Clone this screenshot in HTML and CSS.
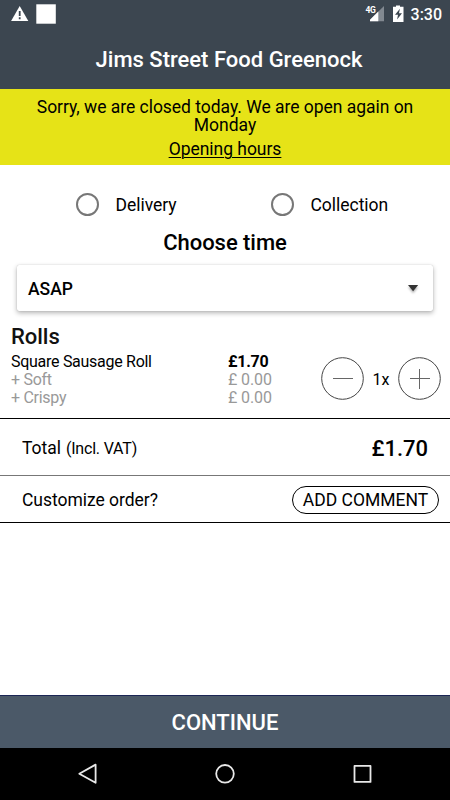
FILE: index.html
```html
<!DOCTYPE html>
<html lang="en">
<head>
<meta charset="utf-8">
<title>Jims Street Food Greenock</title>
<link rel="stylesheet" href="styles.css">
</head>
<body>
<div class="app">
  <header class="status">
    <svg class="status-left" width="60" height="28" viewBox="0 0 60 28">
      <path d="M19.7 6 28.3 21H11.1Z" fill="#fff"/>
      <path d="M19.7 11v5M19.7 17.3v2" stroke="#3c4650" stroke-width="1.8"/>
      <rect x="36.3" y="4.3" width="19.5" height="19.4" fill="#fff"/>
    </svg>
    <div class="status-right">
      <span class="network">4G</span>
      <svg width="41" height="28" viewBox="0 0 41 28">
        <path d="M14 6V21.3H-1.5Z" fill="#828991"/>
        <path d="M8.3 11.5V21.3H-1.5Z" fill="#fff"/>
        <path d="M23 6.8h3V5.5h4v1.3h3.5V22H23Z" fill="#fff"/>
        <path d="M29.9 8.7 25 14.7h3l-.9 4.9 4.9-6.3h-3Z" fill="#3c4650"/>
      </svg>
      <span class="clock">3:30</span>
    </div>
  </header>
  <h1 class="title"><span>Jims Street Food Greenock</span></h1>
  <section class="notice">
    <p>Sorry, we are closed today. We are open again on Monday</p>
    <a>Opening hours</a>
  </section>
  <main class="content">
    <div class="methods">
      <label class="method"><i class="radio"></i><span>Delivery</span></label>
      <label class="method"><i class="radio"></i><span>Collection</span></label>
    </div>
    <h2 class="choose"><span>Choose time</span></h2>
    <div class="select"><span>ASAP</span>
      <svg width="12" height="12" viewBox="0 0 12 12"><path d="M1 2h10.2L6.1 8.2Z" fill="#333"/></svg>
    </div>
    <h3 class="category"><span>Rolls</span></h3>
    <div class="item">
      <div class="names"><div><span>Square Sausage Roll</span></div><div class="extra"><span>+ Soft</span></div><div class="extra"><span>+ Crispy</span></div></div>
      <div class="prices"><div class="price"><span>£1.70</span></div><div class="extra"><span>£ 0.00</span></div><div class="extra"><span>£ 0.00</span></div></div>
      <div class="stepper">
        <svg width="43" height="44" viewBox="0 0 43 44"><circle cx="21.5" cy="21.5" r="20.8" /><path d="M12 21.5h20"/></svg>
        <span class="qty">1x</span>
        <svg width="43" height="44" viewBox="0 0 43 44"><circle cx="21.5" cy="21.5" r="20.8" /><path d="M12 21.5h20M21.5 12v20"/></svg>
      </div>
    </div>
    <div class="total"><span class="label">Total</span><span class="vat">(Incl. VAT)</span><strong>£1.70</strong></div>
    <div class="customize"><span class="label">Customize order?</span><button class="comment">ADD COMMENT</button></div>
  </main>
  <button class="continue"><span>CONTINUE</span></button>
  <nav class="nav">
    <svg width="450" height="52" viewBox="0 0 450 52" fill="none" stroke="#e8e8e8" stroke-width="1.8" stroke-linejoin="round">
      <path d="M95.6 16.6V34.8L79.3 25.7Z"/><circle cx="225" cy="25.8" r="8.8"/><rect x="354.5" y="17.9" width="16" height="16"/>
    </svg>
  </nav>
</div>
</body>
</html>
```
FILE: styles.css
```css
* { box-sizing: border-box; }
body { margin: 0; background: #fff; color: #000; font-family: Roboto, sans-serif; font-size: 17.5px; letter-spacing: -.03px; }
h1, h2, h3, p { margin: 0; font-weight: 500; }
svg { display: block; }
button { font-family: inherit; color: inherit; margin: 0; }
.app { width: 450px; height: 800px; display: flex; flex-direction: column; overflow: hidden; }
.status { height: 28px; flex: none; display: flex; justify-content: space-between; background: #3c4650; color: #fff; }
.status-right { display: flex; padding-right: 9px; }
.network { font-size: 8.5px; font-weight: 700; line-height: 10px; padding-top: 5px; width: 4px; white-space: nowrap; letter-spacing: -.6px; }
.clock { font-size: 16px; font-weight: 500; line-height: 29px; margin-right: -1px; }
.title { height: 61px; flex: none; background: #3c4650; color: #fff; text-align: center; font-size: 22px; line-height: 63px; padding-left: 8px; letter-spacing: 0; }
.notice { height: 76px; flex: none; background: #e6e317; text-align: center; padding: 9px 20px 0; line-height: 18px; }
.notice p { font-weight: 400; }
.notice a { display: block; margin-top: 6px; text-decoration: underline; text-decoration-thickness: 1px; text-underline-offset: 2px; }
.content { flex: 1; }
.methods { height: 64px; display: flex; padding: 14px 0 0 76px; }
.method { display: flex; flex: none; align-items: center; gap: 16.5px; width: 195px; height: 50px; }
.method + .method { width: 140px; }
.method span { padding-top: 2px; }
.radio { width: 23px; height: 23px; border: 2px solid #777; border-radius: 50%; }
.choose { height: 28px; line-height: 28px; font-size: 22px; text-align: center; }
.select { height: 46px; margin: 8px 17px 0 17px; padding: 1px 14px 0 11px; display: flex; align-items: center; justify-content: space-between; font-weight: 500; border-radius: 2px; box-shadow: 0 2px 5px rgba(0,0,0,.3), 0 0 1px rgba(0,0,0,.25); }
.select span { padding-top: 1px; }
.select svg { filter: drop-shadow(0 2px 1px rgba(0,0,0,.3)); }
.category { height: 26px; margin: 12px 0 0 11px; font-size: 22px; line-height: 28px; color: #111; }
.item { height: 70px; display: flex; padding: 4px 9px 0 11px; font-size: 16px; letter-spacing: -.28px; line-height: 18px; border-bottom: 1px solid #000; }
.names { width: 217px; }
.extra { color: #999; }
.prices .extra { letter-spacing: -.1px; }
.price { font-weight: 700; }
.stepper { margin-left: auto; height: 44px; margin-top: 4px; display: flex; align-items: center; }
.stepper svg { fill: none; stroke: #444; stroke-width: 1; }
.stepper path { stroke: #666; }
.qty { width: 34px; padding-top: 2px; text-align: center; letter-spacing: 0; }
.total { height: 57px; display: flex; align-items: center; padding: 2px 22px 0; border-bottom: 1px solid #777; }
.vat { font-size: 16px; letter-spacing: -.2px; margin-left: 5px; }
.total strong { margin-left: auto; font-size: 22px; font-weight: 500; }
.customize { height: 47px; display: flex; align-items: center; justify-content: space-between; padding: 1px 11px 0 22px; border-bottom: 1px solid #000; }
.comment { width: 147px; height: 28px; border: 1px solid #000; border-radius: 14px; background: #fff; font-size: 17.5px; padding: 1px 0 0; }
.continue { height: 53px; flex: none; border: 0; border-top: 1px solid #1b2655; background: #4b5968; color: #fff; font-size: 22px; font-weight: 500; padding: 0; }
.nav { height: 52px; flex: none; background: #000; }
```
